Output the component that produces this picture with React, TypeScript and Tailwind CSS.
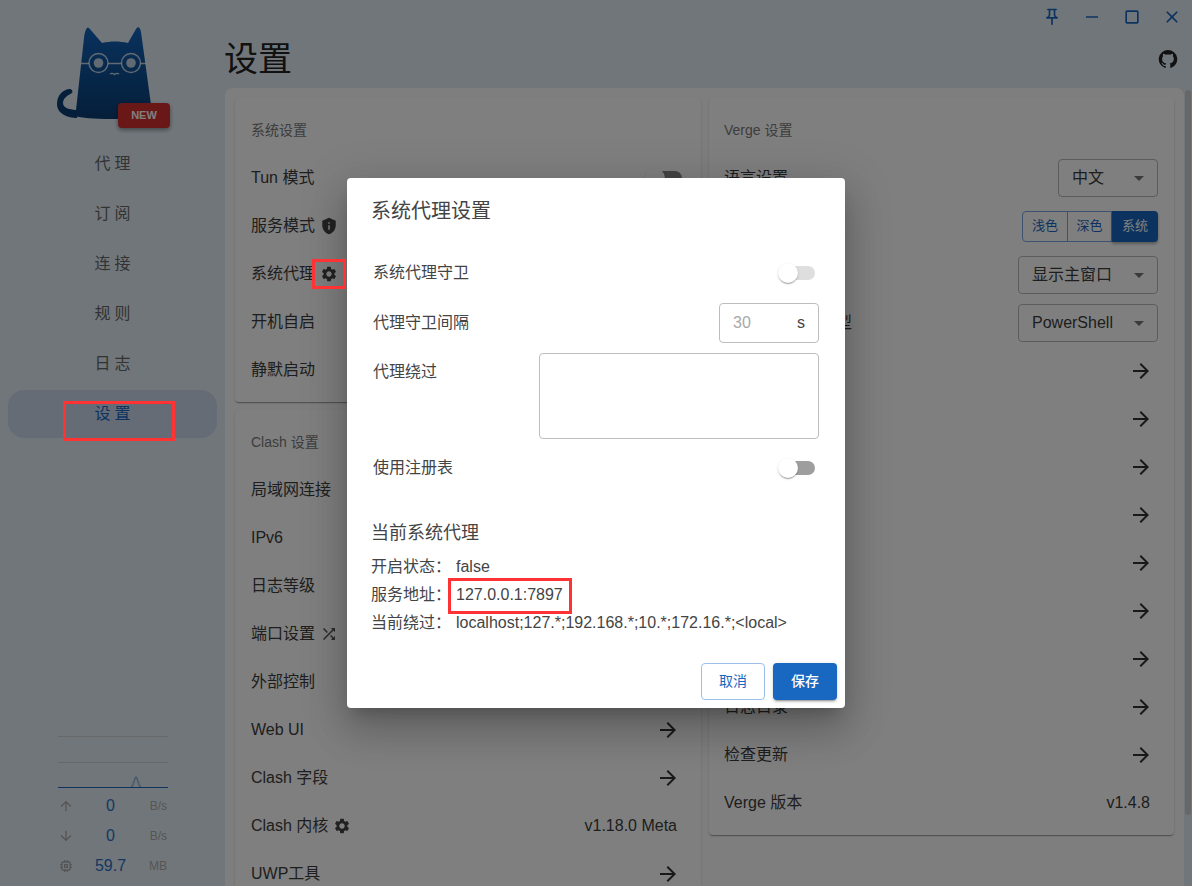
import React from "react";
import {
  MdSettings, MdPrivacyTip, MdShuffle, MdArrowForward, MdOutlinePushPin, MdHorizontalRule,
  MdCropSquare, MdClose, MdArrowUpward, MdArrowDownward, MdMemory,
} from "react-icons/md";

function Logo() {
  return (
    <svg width="120" height="100" viewBox="50 20 120 100" className="block">
      <defs>
        <linearGradient id="cat" x1="0" y1="0" x2="0" y2="1">
          <stop offset="0" stopColor="#1464bc" />
          <stop offset="0.55" stopColor="#0d4e92" />
          <stop offset="1" stopColor="#0a3e74" />
        </linearGradient>
      </defs>
      <path d="M77 118 C68 118 57 114 57 104 C57 95 63 90 69 89 C72 89 73 91 72 93 C66 96 63 99 63 103 C63 108 70 110 78 110 Z" fill="#0a3e74" />
      <path d="M76 110 L84 38 C85 30 87 26 89 28 L102 43 C110 41 120 41 128 43 L136 29 C138 26 140 27 141 32 L152 112 C152 116 140 119 110 119 C95 119 80 118 76 116 Z" fill="url(#cat)" />
      <g fill="none" stroke="#ffffff" strokeOpacity="0.75" strokeWidth="1.4">
        <circle cx="98.5" cy="63" r="9.5" />
        <circle cx="131" cy="63" r="9.5" />
        <path d="M81 63.500 H89 M108 63.500 H121.500 M140.500 63.500 H147" />
        <path d="M110 74 Q112 72.500 114.500 74.500 Q117 72.500 119 74" />
      </g>
      <circle cx="98.500" cy="63" r="4.800" fill="#ffffff" fillOpacity="0.75" />
      <circle cx="131" cy="63" r="4.800" fill="#ffffff" fillOpacity="0.75" />
    </svg>
  );
}

function GitHub() {
  return (
    <svg width="20" height="20" viewBox="0 0 24 24" fill="#222">
      <path d="M12 1.27a11 11 0 00-3.48 21.46c.55.09.73-.28.73-.55v-1.84c-3.03.64-3.67-1.46-3.67-1.46-.55-1.29-1.28-1.65-1.28-1.65-.92-.65.1-.65.1-.65 1.1 0 1.73 1.1 1.73 1.1.92 1.65 2.57 1.2 3.21.92a2 2 0 01.64-1.47c-2.47-.27-5.04-1.19-5.04-5.5 0-1.1.46-2.1 1.2-2.84a3.76 3.76 0 010-2.93s.91-.28 3.11 1.1c1.8-.49 3.7-.49 5.5 0 2.1-1.38 3.02-1.1 3.02-1.1a3.76 3.76 0 010 2.93c.83.74 1.2 1.74 1.2 2.94 0 4.21-2.57 5.13-5.04 5.4.45.37.82.92.82 2.02v3.03c0 .27.1.64.73.55A11 11 0 0012 1.27" />
    </svg>
  );
}

function Row({ label, icon, children, className = "" }: { label: string; icon?: React.ReactNode; children?: React.ReactNode; className?: string }) {
  return (
    <div className={`flex h-12 items-center justify-between text-base text-[#3c3c3c] ${className}`}>
      <div className="flex items-center gap-[5px] whitespace-nowrap">
        <span>{label}</span>
        {icon}
      </div>
      {children}
    </div>
  );
}

const Arrow = () => <MdArrowForward size={24} className="mr-[5px] text-[#333]" />;

function Toggle({ track }: { track: string }) {
  return (
    <span className="relative block h-5 w-[37px]">
      <span className={`absolute right-0 top-[3px] h-[14px] w-[34px] rounded-full ${track}`} />
      <span className="absolute left-0 top-0 h-5 w-5 rounded-full bg-white shadow-[0_2px_1px_-1px_rgba(0,0,0,.2),0_1px_1px_0_rgba(0,0,0,.14),0_1px_3px_0_rgba(0,0,0,.12)]" />
    </span>
  );
}

function Select({ w, value }: { w: string; value: string }) {
  return (
    <div className={`flex h-[38px] items-center justify-between rounded border border-[#b9b9b9] pl-[13px] pr-[13px] ${w}`}>
      <span>{value}</span>
      <span className="h-0 w-0 border-x-[5px] border-t-[5px] border-x-transparent border-t-[#777]" />
    </div>
  );
}

function Card({ title, children, className = "" }: { title: string; children: React.ReactNode; className?: string }) {
  return (
    <section className={`rounded bg-white pb-2 pl-4 pr-4 pt-2 shadow-[0_2px_1px_-1px_rgba(0,0,0,.2),0_1px_1px_0_rgba(0,0,0,.14),0_1px_3px_0_rgba(0,0,0,.12)] ${className}`}>
      <h2 className="flex h-12 items-center text-sm text-[#7a7a7a]">{title}</h2>
      {children}
    </section>
  );
}

function Nav({ label, active }: { label: string; active?: boolean }) {
  return (
    <div className={`mx-2 mb-[2px] flex h-12 items-center justify-center rounded-[16px] pl-1 text-base tracking-[4px] ${active ? "bg-[#ccd8eb] text-[#1867c0]" : "text-[#666]"}`}>
      {label}
    </div>
  );
}

function Stat({ icon, value, unit }: { icon: React.ReactNode; value: string; unit: string }) {
  return (
    <div className="flex h-[30px] items-center">
      <span className="flex w-4 justify-center text-[#aaa]">{icon}</span>
      <span className="flex-1 text-center text-base text-[#2a70c4]">{value}</span>
      <span className="w-5 whitespace-nowrap text-right text-xs text-[#aaa]">{unit}</span>
    </div>
  );
}

export default function App() {
  return (
    <div className="relative flex h-[886px] w-[1192px] overflow-hidden bg-[#e3edf5] [font-family:'Liberation_Sans','Noto_Sans_CJK_SC',sans-serif]">
      {/* sidebar */}
      <aside className="flex w-[225px] shrink-0 flex-col">
        <div className="relative h-[140px] pl-[50px] pt-[20px]">
          <Logo />
          <span className="absolute left-[118px] top-[103px] flex h-[25px] w-[52px] items-center justify-center rounded bg-[#d32f2f] text-[11px] font-bold text-white shadow-[0_2px_4px_rgba(0,0,0,.4)]">NEW</span>
        </div>
        <nav>
          {["代理", "订阅", "连接", "规则", "日志"].map((l) => <Nav key={l} label={l} />)}
          <Nav label="设置" active />
        </nav>
        <div className="mt-auto px-[58px] pb-[5px]">
          <svg width="110" height="52" viewBox="0 0 110 52" className="block">
            <path d="M0 .5H110M0 26.500H110" stroke="#d0d0d0" strokeWidth="1" fill="none" />
            <path d="M73 51 C76 50 76 42 78 41 C80 42 80 50 83 51" stroke="#90b4d8" strokeWidth="1.600" fill="none" />
            <path d="M0 51.500H110" stroke="#1867c0" strokeWidth="1" fill="none" />
          </svg>
          <div className="mt-[3px]">
            <Stat icon={<MdArrowUpward size={16} />} value="0" unit="B/s" />
            <Stat icon={<MdArrowDownward size={16} />} value="0" unit="B/s" />
            <Stat icon={<MdMemory size={16} />} value="59.7" unit="MB" />
          </div>
        </div>
      </aside>

      {/* main */}
      <main className="flex min-w-0 flex-1 flex-col">
        <div className="flex h-[34px] items-start justify-end">
          {[<MdOutlinePushPin key="p" size={20} />, <MdHorizontalRule key="m" size={18} />, <MdCropSquare key="s" size={20} />, <MdClose key="c" size={20} />].map((ic, i) => (
            <span key={i} className="flex h-[34px] w-10 items-center justify-center text-[#1867c0]">{ic}</span>
          ))}
        </div>
        <header className="-mt-[2px] mb-[2px] flex h-[54px] items-center justify-between pr-[14px]">
          <h1 className="-ml-px text-[34px] font-normal leading-none text-[#222]">设置</h1>
          <GitHub />
        </header>
        <div className="mr-2 flex-1 overflow-hidden rounded-t-lg bg-[#fdfdfd] p-[10px]">
          <div className="grid grid-cols-[466px_465px] gap-2">
            <div className="flex flex-col gap-2">
              <Card title="系统设置">
                <Row label="Tun 模式"><span className="mr-[3px]"><Toggle track="bg-[#888]" /></span></Row>
                <Row label="服务模式" icon={<MdPrivacyTip size={18} className="text-[#444]" />} />
                <Row label="系统代理" icon={<MdSettings size={18} className="text-[#444]" />} />
                <Row label="开机自启" />
                <Row label="静默启动" />
              </Card>
              <Card title="Clash 设置">
                <Row label="局域网连接" />
                <Row label="IPv6" />
                <Row label="日志等级" />
                <Row label="端口设置" icon={<MdShuffle size={18} className="text-[#555]" />} />
                <Row label="外部控制" />
                <Row label="Web UI"><Arrow /></Row>
                <Row label="Clash 字段"><Arrow /></Row>
                <Row label="Clash 内核" icon={<MdSettings size={18} className="text-[#444]" />}><span className="mr-2">v1.18.0 Meta</span></Row>
                <Row label="UWP工具"><Arrow /></Row>
              </Card>
            </div>
            <Card title="Verge 设置" className="self-start pl-[15px]">
              <Row label="语言设置"><Select w="w-[100px]" value="中文" /></Row>
              <Row label="主题模式" className="mb-px">
                <div className="flex h-[31px] text-[13px]">
                  <span className="flex w-[46px] items-center justify-center rounded-l border border-[#7aa5dc] text-[#1867c0]">浅色</span>
                  <span className="-ml-px flex w-[45px] items-center justify-center border border-[#7aa5dc] text-[#1867c0]">深色</span>
                  <span className="flex w-[46px] items-center justify-center rounded-r bg-[#1867c0] text-white shadow-[0_2px_3px_rgba(0,0,0,.3)]">系统</span>
                </div>
              </Row>
              <Row label="托盘点击事件"><Select w="w-[140px]" value="显示主窗口" /></Row>
              <Row label="默认外部终端类型"><Select w="w-[140px]" value="PowerShell" /></Row>
              {["主题设置", "图层设置", "杂项设置", "热键设置", "运行时配置", "配置目录", "内核目录", "日志目录", "检查更新"].map((l) => (
                <Row key={l} label={l}><Arrow /></Row>
              ))}
              <Row label="Verge 版本"><span className="mr-2">v1.4.8</span></Row>
            </Card>
          </div>
        </div>
      </main>

      {/* scrollbar */}
      <span className="absolute left-[1185px] top-[90px] h-[725px] w-[6px] rounded-full bg-[#cfcfcf]" />

      {/* modal */}
      <div className="absolute inset-0 flex items-center justify-center bg-black/50">
        <div className="h-[530px] w-[498px] rounded bg-white pt-[17px] text-base text-[#444] shadow-[0_11px_15px_-7px_rgba(0,0,0,.2),0_24px_38px_3px_rgba(0,0,0,.14),0_9px_46px_8px_rgba(0,0,0,.12)]">
          <h2 className="flex h-8 items-center px-6 text-xl font-normal">系统代理设置</h2>
          <div className="px-6 pt-[26px]">
            <div className="mx-[2px] flex h-10 items-center justify-between">
              <span>系统代理守卫</span>
              <span className="mr-[4px]"><Toggle track="bg-[#dedede]" /></span>
            </div>
            <div className="mx-[2px] mt-[10px] flex h-10 items-center justify-between">
              <span>代理守卫间隔</span>
              <div className="flex h-10 w-[100px] items-center justify-between rounded border border-[#bdbdbd] px-[13px]">
                <span className="text-[#a8a8a8]">30</span>
                <span>s</span>
              </div>
            </div>
            <div className="mx-[2px] mt-[10px] flex h-[86px] justify-between">
              <span className="pt-[7px]">代理绕过</span>
              <div className="h-[86px] w-[280px] rounded border border-[#bdbdbd]" />
            </div>
            <div className="mx-[2px] mt-[10px] flex h-[38px] items-center justify-between">
              <span>使用注册表</span>
              <span className="mr-[4px]"><Toggle track="bg-[#9e9e9e]" /></span>
            </div>
            <h3 className="mt-[32px] flex h-7 items-center text-lg font-normal">当前系统代理</h3>
            <div className="mt-[6px]">
              <div className="flex h-7 items-center"><span className="w-[85px]">开启状态：</span><span>false</span></div>
              <div className="flex h-7 items-center">
                <span className="w-[85px]">服务地址：</span>
                <span className="relative">
                  127.0.0.1:7897
                  <span className="absolute -bottom-[7px] -left-[8px] -right-[9px] -top-[5px] border-[3px] border-[#ff3333]" />
                </span>
              </div>
              <div className="flex h-7 items-center"><span className="w-[85px]">当前绕过：</span><span>localhost;127.*;192.168.*;10.*;172.16.*;&lt;local&gt;</span></div>
            </div>
          </div>
          <div className="mt-[26px] flex justify-end gap-2 pr-2">
            <button className="h-[37px] w-16 rounded border border-[#9cc0ea] pb-[2px] text-sm text-[#1867c0]">取消</button>
            <button className="h-[37px] w-16 rounded bg-[#1867c0] pb-[2px] text-sm font-medium text-white shadow-[0_3px_1px_-2px_rgba(0,0,0,.2),0_2px_2px_0_rgba(0,0,0,.14),0_1px_5px_0_rgba(0,0,0,.12)]">保存</button>
          </div>
        </div>
      </div>

      {/* annotations */}
      <span className="absolute left-[312px] top-[259px] h-[30px] w-[34px] border-[3px] border-[#ff3333]" />
      <span className="absolute left-[63px] top-[401px] h-[40px] w-[112px] border-[3px] border-[#ff3333]" />
    </div>
  );
}
